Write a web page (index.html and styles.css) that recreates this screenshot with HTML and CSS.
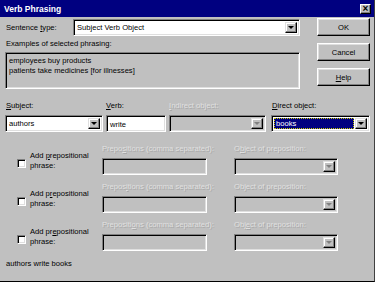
FILE: index.html
```html
<!DOCTYPE html>
<html lang="en">
<head>
    <meta charset="UTF-8">
    <title>Verb Phrasing</title>
    <link rel="stylesheet" href="styles.css">
</head>
<body>
    <div class="dialog">
        <div class="titlebar">
            <span class="title">Verb Phrasing</span>
            <span class="close">&#215;</span>
        </div>
        <div class="content">
            <div class="top">
                <div class="main">
                    <div class="type-row">
                        <label class="type-label">Sentence <u>t</u>ype:</label>
                        <div class="combo sunken type-combo">
                            <span class="value">Subject Verb Object</span>
                            <span class="arrow"></span>
                        </div>
                    </div>
                    <div class="ex-label">Examples of selected phrasing:</div>
                    <div class="examples sunken">
                        employees buy products<br>
                        patients take medicines [for illnesses]
                    </div>
                </div>
                <div class="buttons">
                    <button class="btn">OK</button>
                    <button class="btn">Cancel</button>
                    <button class="btn"><u>H</u>elp</button>
                </div>
            </div>

            <div class="objects">
                <div class="field f-subject">
                    <label><u>S</u>ubject:</label>
                    <div class="combo sunken">
                        <span class="value">authors</span>
                        <span class="arrow"></span>
                    </div>
                </div>
                <div class="field f-verb">
                    <label><u>V</u>erb:</label>
                    <div class="textbox sunken">write</div>
                </div>
                <div class="field f-indirect disabled">
                    <label><u>I</u>ndirect object:</label>
                    <div class="combo sunken">
                        <span class="value"></span>
                        <span class="arrow"></span>
                    </div>
                </div>
                <div class="field f-direct">
                    <label><u>D</u>irect object:</label>
                    <div class="combo sunken">
                        <span class="value"><span class="selected">books</span></span>
                        <span class="arrow"></span>
                    </div>
                </div>
            </div>

            <div class="prep">
                <div class="check-area">
                    <span class="checkbox sunken"></span>
                    <span class="check-text">Add <u>p</u>repositional<br>phrase:</span>
                </div>
                <div class="field f-preps disabled">
                    <label>Prepo<u>s</u>itions (comma separated):</label>
                    <div class="textbox sunken"></div>
                </div>
                <div class="field f-pobj disabled">
                    <label>O<u>b</u>ject of preposition:</label>
                    <div class="combo sunken">
                        <span class="value"></span>
                        <span class="arrow"></span>
                    </div>
                </div>
            </div>
            <div class="prep">
                <div class="check-area">
                    <span class="checkbox sunken"></span>
                    <span class="check-text">Add p<u>r</u>epositional<br>phrase:</span>
                </div>
                <div class="field f-preps disabled">
                    <label>Prepos<u>i</u>tions (comma separated):</label>
                    <div class="textbox sunken"></div>
                </div>
                <div class="field f-pobj disabled">
                    <label>Ob<u>j</u>ect of preposition:</label>
                    <div class="combo sunken">
                        <span class="value"></span>
                        <span class="arrow"></span>
                    </div>
                </div>
            </div>
            <div class="prep">
                <div class="check-area">
                    <span class="checkbox sunken"></span>
                    <span class="check-text">Add pr<u>e</u>positional<br>phrase:</span>
                </div>
                <div class="field f-preps disabled">
                    <label>Prepositi<u>o</u>ns (comma separated):</label>
                    <div class="textbox sunken"></div>
                </div>
                <div class="field f-pobj disabled">
                    <label>Obj<u>e</u>ct of preposition:</label>
                    <div class="combo sunken">
                        <span class="value"></span>
                        <span class="arrow"></span>
                    </div>
                </div>
            </div>

            <div class="status">authors write books</div>
        </div>
    </div>
</body>
</html>
```

FILE: styles.css
```css
body {
    margin: 0;
    padding: 0;
    font-family: "Liberation Sans", Arial, sans-serif;
    font-size: 7.6px;
    color: #000;
    background-color: #c0c0c0;
}
.dialog {
    width: 375px;
    height: 282px;
    box-sizing: border-box;
    background-color: #c0c0c0;
    border-right: 1px solid #404040;
    border-bottom: 1px solid #000;
    overflow: hidden;
}
.titlebar {
    height: 17px;
    background-color: #000080;
    display: flex;
    align-items: center;
    justify-content: space-between;
    padding: 0 3px 0 4px;
}
.title {
    color: #fff;
    font-weight: bold;
    font-size: 8.5px;
}
.close {
    width: 11px;
    height: 10px;
    box-sizing: border-box;
    background: #c0c0c0;
    border: 1px solid;
    border-color: #fff #000 #000 #fff;
    box-shadow: inset -1px -1px #808080;
    font-size: 10px;
    font-weight: bold;
    line-height: 8px;
    text-align: center;
}
.content {
    padding-left: 5px;
}
u {
    text-decoration: underline;
    text-underline-offset: 1px;
}
label {
    white-space: nowrap;
}

/* 3d borders */
.sunken {
    box-sizing: border-box;
    border: 1px solid;
    border-color: #808080 #fff #fff #808080;
    box-shadow: inset 1px 1px 0 #000, inset -1px -1px 0 #dfdfdf;
}
.btn {
    display: block;
    width: 53px;
    height: 18px;
    padding: 0;
    font-family: inherit;
    font-size: 7.6px;
    color: #000;
    background-color: #c0c0c0;
    border: 1px solid;
    border-color: #fff #000 #000 #fff;
    box-shadow: inset -1px -1px 0 #808080, inset 1px 1px 0 #dfdfdf;
}

/* top area */
.top {
    display: flex;
}
.main {
    width: 295px;
    padding-top: 2px;
}
.type-row {
    display: flex;
    align-items: center;
    height: 17px;
}
.type-label {
    width: 67px;
    padding-left: 1px;
}
.type-combo {
    flex: 1;
}
.ex-label {
    height: 16px;
    line-height: 16px;
    padding-left: 1px;
}
.examples {
    height: 37px;
    padding: 3px 3px;
    line-height: 10px;
}
.buttons {
    margin-left: 17px;
    padding-top: 1px;
    display: flex;
    flex-direction: column;
    gap: 7px;
}

/* combos and fields */
.combo {
    height: 17px;
    background-color: #fff;
    display: flex;
    align-items: stretch;
    padding: 2px;
}
.combo .value {
    flex: 1;
    display: flex;
    align-items: center;
    padding-left: 1px;
}
.arrow {
    width: 12px;
    box-sizing: border-box;
    background-color: #c0c0c0;
    border: 1px solid;
    border-color: #dfdfdf #000 #000 #dfdfdf;
    box-shadow: inset -1px -1px 0 #808080, inset 1px 1px 0 #fff;
    display: flex;
    align-items: center;
    justify-content: center;
}
.arrow::after {
    content: "";
    border-left: 3px solid transparent;
    border-right: 3px solid transparent;
    border-top: 3px solid #000;
}
.textbox {
    height: 17px;
    background-color: #fff;
    padding: 2px 3px;
    line-height: 13px;
}
.field label {
    display: block;
    height: 12px;
    line-height: 12px;
    margin-bottom: 3px;
}
.disabled label {
    color: #e0e0e0;
    text-shadow: 1px 1px 0 #a8a8a8;
}
.disabled .combo,
.disabled .textbox {
    background-color: #c0c0c0;
}
.disabled .arrow::after {
    border-top-color: #808080;
}

.objects {
    display: flex;
    margin-top: 11px;
}
.f-subject { width: 98px; }
.f-verb { width: 60px; margin-left: 3px; }
.f-indirect { width: 97px; margin-left: 3px; }
.f-direct { width: 99px; margin-left: 5px; }
.f-subject label,
.f-direct label {
    padding-left: 1px;
}
.selected {
    background-color: #000080;
    color: #fff;
    flex: 1;
    align-self: stretch;
    display: flex;
    align-items: center;
    padding-left: 2px;
    outline: 1px dotted #c8c800;
    outline-offset: -1px;
    margin-right: 1px;
}
.f-direct .value {
    padding-left: 0;
}

/* prepositional rows */
.prep {
    display: flex;
    margin-top: 6px;
}
.objects + .prep {
    margin-top: 11px;
}
.check-area {
    width: 97px;
    display: flex;
    padding-left: 12px;
    padding-top: 8px;
    box-sizing: border-box;
}
.checkbox {
    width: 9px;
    height: 9px;
    margin-top: 8px;
    background-color: #fff;
    flex: none;
}
.check-text {
    margin-left: 4px;
    line-height: 10px;
}
.f-preps { width: 105px; }
.f-pobj { width: 104px; margin-left: 27px; }

.status {
    margin-top: 7px;
    padding-left: 1px;
    line-height: 12px;
}
```
